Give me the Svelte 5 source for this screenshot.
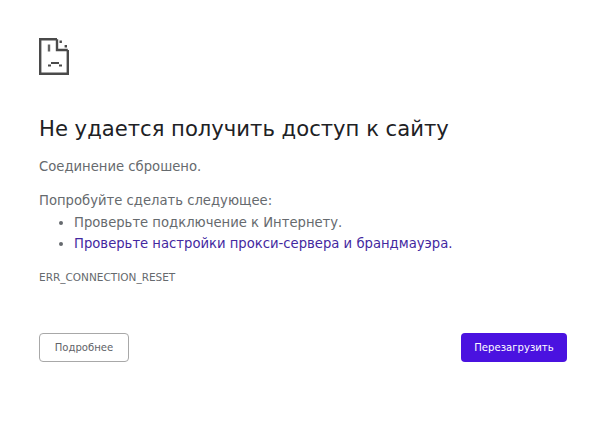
<script>
  const tips = [
    { text: 'Проверьте подключение к Интернету.' },
    { text: 'Проверьте настройки прокси-сервера и брандмауэра.', href: '#proxy' }
  ]
</script>

<main class="page">
  <svg class="icon" width="30" height="38" viewBox="0 0 30 38" fill="none" stroke="#4a4a4a" stroke-width="2.4">
    <path d="M18 1.2H1.2V35.8H28.8V12" />
    <path d="M18 1.2V12H28.8" />
    <path d="M20.5 2.5h2.4v2.4h-2.4zM25.6 7h2.4v2.4h-2.4z" fill="#4a4a4a" stroke="none" />
    <path d="M10 6.5v7" stroke-width="2.4" opacity="0.85" />
    <path d="M12 25h8" stroke-width="2" />
    <path d="M9 27.5h3M20 27.5h3" stroke-width="2" />
  </svg>

  <h1>Не удается получить доступ к сайту</h1>
  <p class="reason">Соединение сброшено.</p>

  <div class="suggest">
    <p>Попробуйте сделать следующее:</p>
    <ul>
      {#each tips as tip}
        <li>
          {#if tip.href}
            <a href={tip.href}>{tip.text}</a>
          {:else}
            {tip.text}
          {/if}
        </li>
      {/each}
    </ul>
  </div>

  <div class="code">ERR_CONNECTION_RESET</div>

  <div class="actions">
    <button class="details">Подробнее</button>
    <button class="reload">Перезагрузить</button>
  </div>
</main>

<style>
  :global(body) {
    margin: 0;
    background: #fff;
  }

  .page {
    box-sizing: border-box;
    width: 604px;
    height: 429px;
    padding: 38px 37px 0 39px;
    font-family: 'DejaVu Sans', sans-serif;
    color: #666a6e;
    font-size: 13.2px;
    overflow: hidden;
  }

  .icon {
    display: block;
  }

  h1 {
    margin: 38px 0 0;
    font-size: 21.15px;
    line-height: 30px;
    font-weight: 400;
    color: #202124;
  }

  p {
    margin: 0;
  }

  .reason {
    margin-top: 13px;
    line-height: 20px;
  }

  .suggest {
    margin-top: 14px;
    line-height: 20px;
  }

  ul {
    margin: 1px 0 0;
    padding: 0 0 0 35px;
  }

  li {
    line-height: 21px;
  }

  a {
    color: #43289f;
    text-decoration: none;
  }

  .code {
    margin-top: 16px;
    font-size: 10.5px;
    line-height: 14px;
  }

  .actions {
    display: flex;
    justify-content: space-between;
    margin-top: 49px;
  }

  button {
    box-sizing: border-box;
    height: 29px;
    padding: 0;
    border-radius: 4px;
    font-family: 'DejaVu Sans', sans-serif;
    font-size: 10.1px;
  }

  .details {
    width: 90px;
    background: #fff;
    border: 1px solid #a8a8a8;
    color: #5f6368;
  }

  .reload {
    width: 106px;
    background: #4a12e0;
    border: none;
    color: #fff;
  }
</style>
